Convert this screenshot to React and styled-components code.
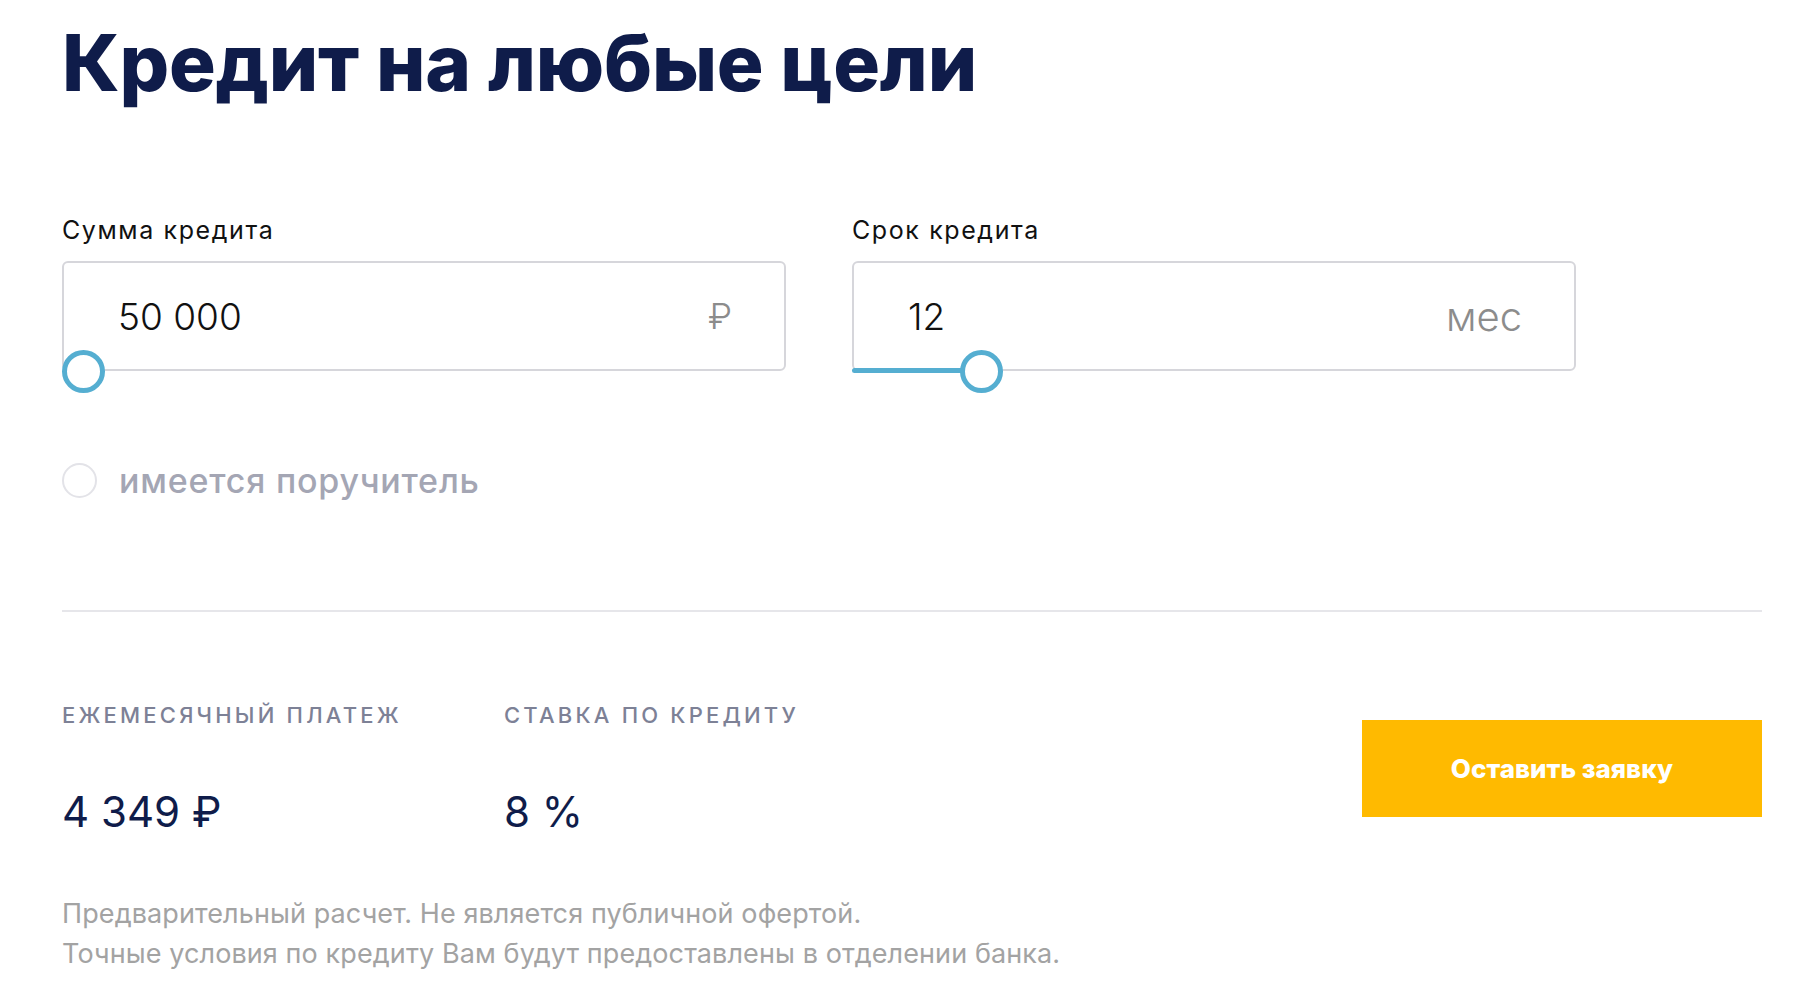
import React from "react";
import styled, { createGlobalStyle } from "styled-components";

const GlobalStyle = createGlobalStyle`
  body {
    margin: 0;
    background: #ffffff;
    font-family: "Inter", "Noto Sans", sans-serif;
  }
`;

const Page = styled.div`
  width: 1700px;
  padding: 24px 0 40px 62px;
`;

const Title = styled.h1`
  margin: 0;
  font-size: 78px;
  line-height: 78px;
  font-weight: 800;
  letter-spacing: -0.2px;
  color: #0f1c4a;
`;

const Fields = styled.div`
  display: grid;
  grid-template-columns: 724px 724px;
  column-gap: 66px;
  margin-top: 114px;
`;

const Label = styled.div`
  font-size: 25px;
  line-height: 28px;
  letter-spacing: 1.6px;
  color: #111111;
  margin-bottom: 17px;
`;

const InputBox = styled.div`
  position: relative;
  box-sizing: border-box;
  height: 110px;
  border: 2px solid #d6d6db;
  border-radius: 6px;
  display: flex;
  align-items: center;
  justify-content: space-between;
  padding: 0 52px 0 54px;
`;

const Value = styled.span`
  font-size: 37px;
  font-weight: 300;
  color: #111111;
`;

const Unit = styled.span`
  font-size: ${(p) => p.size}px;
  font-weight: 300;
  color: #8c8c8c;
`;

const Track = styled.div`
  position: absolute;
  left: -2px;
  bottom: -4px;
  height: 5px;
  border-radius: 3px 0 0 3px;
  background: #55aed1;
`;

const Thumb = styled.div`
  position: absolute;
  bottom: -24px;
  box-sizing: border-box;
  width: 43px;
  height: 43px;
  border: 5px solid #55aed1;
  border-radius: 50%;
  background: #ffffff;
`;

const Check = styled.label`
  display: flex;
  align-items: center;
  gap: 22px;
  margin-top: 89px;
  font-size: 34px;
  font-weight: 500;
  letter-spacing: 0.8px;
  color: #a4a6b4;
`;

const Circle = styled.span`
  box-sizing: border-box;
  width: 35px;
  height: 35px;
  border: 2px solid #e3e3e8;
  border-radius: 50%;
`;

const Divider = styled.hr`
  margin: 109px 0 0;
  border: 0;
  border-top: 2px solid #e6e6ea;
`;

const Results = styled.div`
  display: flex;
  align-items: flex-start;
  margin-top: 89px;
`;

const Stat = styled.div`
  width: 442px;
`;

const StatLabel = styled.div`
  font-size: 22px;
  line-height: 28px;
  font-weight: 500;
  letter-spacing: 3.2px;
  text-transform: uppercase;
  color: #7d8196;
`;

const StatValue = styled.div`
  margin-top: 57px;
  font-size: 42px;
  line-height: 52px;
  color: #0f1c4a;
`;

const Button = styled.button`
  margin: 19px 0 0 auto;
  width: 400px;
  height: 97px;
  border: 0;
  background: #ffba00;
  color: #ffffff;
  font-family: inherit;
  font-size: 26px;
  font-weight: 800;
  cursor: pointer;
`;

const Note = styled.p`
  margin: 56px 0 0;
  font-size: 27px;
  line-height: 40px;
  letter-spacing: 0.1px;
  color: #a3a3a3;
`;

const Field = ({ label, value, unit, unitSize, pos }) => (
  <div>
    <Label>{label}</Label>
    <InputBox>
      <Value>{value}</Value>
      <Unit size={unitSize}>{unit}</Unit>
      {pos > 0 && <Track style={{ width: pos + 22 }} />}
      <Thumb style={{ left: pos - 2 }} />
    </InputBox>
  </div>
);

export default function App() {
  return (
    <Page>
      <GlobalStyle />
      <Title>Кредит на любые цели</Title>
      <Fields>
        <Field label="Сумма кредита" value="50 000" unit="₽" unitSize={36} pos={0} />
        <Field label="Срок кредита" value="12" unit="мес" unitSize={40} pos={108} />
      </Fields>
      <Check>
        <Circle />
        имеется поручитель
      </Check>
      <Divider />
      <Results>
        <Stat>
          <StatLabel>Ежемесячный платеж</StatLabel>
          <StatValue>4 349 ₽</StatValue>
        </Stat>
        <Stat>
          <StatLabel>Ставка по кредиту</StatLabel>
          <StatValue>8 %</StatValue>
        </Stat>
        <Button>Оставить заявку</Button>
      </Results>
      <Note>
        Предварительный расчет. Не является публичной офертой.
        <br />
        Точные условия по кредиту Вам будут предоставлены в отделении банка.
      </Note>
    </Page>
  );
}
